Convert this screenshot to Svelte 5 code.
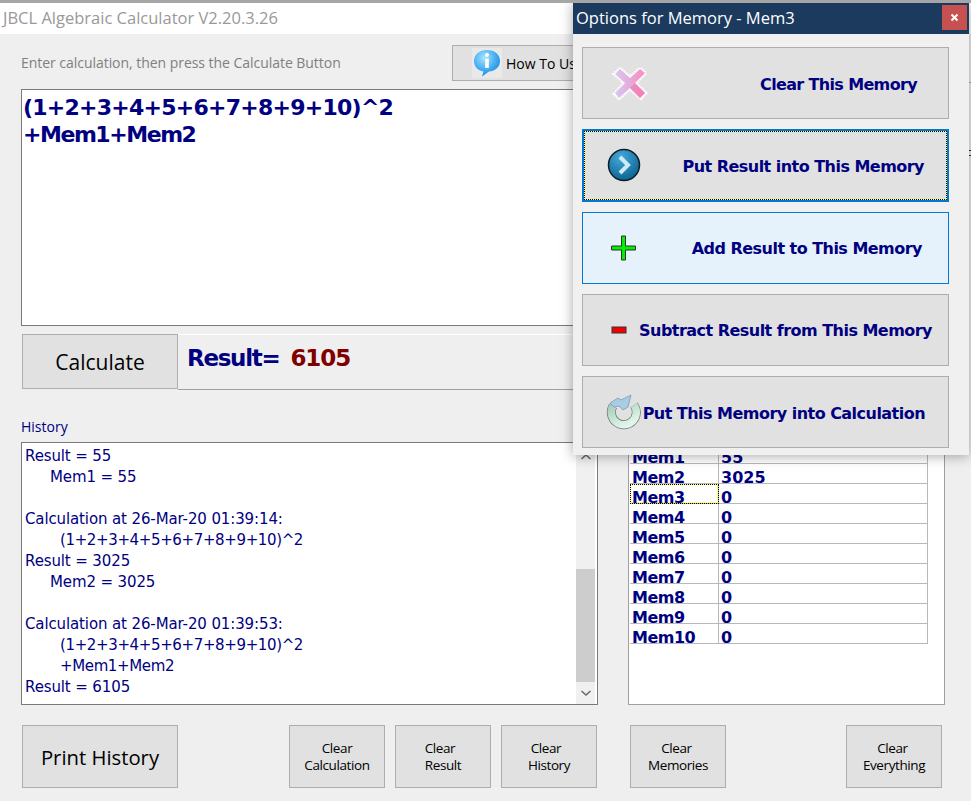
<script>
  const options = [
    { id: 'clear', label: 'Clear This Memory' },
    { id: 'put', label: 'Put Result into This Memory' },
    { id: 'add', label: 'Add Result to This Memory' },
    { id: 'sub', label: 'Subtract Result from This Memory' },
    { id: 'recall', label: 'Put This Memory into Calculation' }
  ];

  const memories = [
    ['Mem1', '55'], ['Mem2', '3025'], ['Mem3', '0'], ['Mem4', '0'], ['Mem5', '0'],
    ['Mem6', '0'], ['Mem7', '0'], ['Mem8', '0'], ['Mem9', '0'], ['Mem10', '0']
  ];

  const history = [
    ['', 'Result = 55'],
    ['mem', 'Mem1 = 55'],
    ['', '\u00a0'],
    ['', 'Calculation at 26-Mar-20 01:39:14:'],
    ['indent', '(1+2+3+4+5+6+7+8+9+10)^2'],
    ['', 'Result = 3025'],
    ['mem', 'Mem2 = 3025'],
    ['', '\u00a0'],
    ['', 'Calculation at 26-Mar-20 01:39:53:'],
    ['indent', '(1+2+3+4+5+6+7+8+9+10)^2'],
    ['indent', '+Mem1+Mem2'],
    ['', 'Result = 6105']
  ];
</script>

<div class="window">
  <header class="titlebar">JBCL Algebraic Calculator V2.20.3.26</header>

  <main class="content">
    <div class="toprow">
      <span class="hint">Enter calculation, then press the Calculate Button</span>
      <button class="btn howto">
        <span class="infobox">
          <svg width="28" height="28" viewBox="0 0 28 28">
            <defs>
              <radialGradient id="bub" cx="0.4" cy="0.3" r="0.8">
                <stop offset="0" stop-color="#a8e4ff" />
                <stop offset="0.6" stop-color="#3aa8f0" />
                <stop offset="1" stop-color="#1878d0" />
              </radialGradient>
            </defs>
            <path d="M14 1C6.5 1 1 5.6 1 12c0 5.5 4 9.6 9.5 10.6L9 27.5l7-5C22.500 22 27 17.600 27 12 27 5.600 21.500 1 14 1z" fill="url(#bub)" />
            <rect x="12.200" y="9.500" width="3.600" height="9.500" fill="#fff" />
            <circle cx="14" cy="6" r="2" fill="#fff" />
          </svg>
        </span>
        How To Use
      </button>
    </div>

    <div class="calc">(1+2+3+4+5+6+7+8+9+10)^2<br /><span class="second">+Mem1+Mem2</span></div>

    <div class="resultrow">
      <button class="btn calculate">Calculate</button>
      <div class="result"><b>Result=</b><b class="value">6105</b></div>
    </div>

    <div class="historylabel">History</div>

    <div class="panels">
      <div class="history">
        <div class="lines">
          {#each history as [kind, text]}
            <div class={kind}>{text}</div>
          {/each}
        </div>
        <div class="scrollbar">
          <svg class="arrow up" width="12" height="8" viewBox="0 0 12 8"><path d="M1.500 6L6 2l4.500 4" fill="none" stroke="#666" stroke-width="1.500" /></svg>
          <div class="thumb"></div>
          <svg class="arrow" width="12" height="8" viewBox="0 0 12 8"><path d="M1.500 2L6 6l4.500-4" fill="none" stroke="#666" stroke-width="1.500" /></svg>
        </div>
      </div>

      <div class="memories">
        <div class="memgrid">
          {#each memories as [name, value]}
            <div class="name" class:focused={name === 'Mem3'}>{name}</div>
            <div class="val">{value}</div>
          {/each}
        </div>
      </div>
    </div>

    <div class="bottom">
      <button class="btn print">Print History</button>
      <button class="btn small">Clear<br />Calculation</button>
      <button class="btn small">Clear&nbsp;&nbsp;<br />Result</button>
      <button class="btn small">Clear&nbsp;&nbsp;<br />History</button>
      <button class="btn small c2">Clear&nbsp;<br />Memories</button>
      <button class="btn small c3">Clear&nbsp;<br />Everything</button>
    </div>
  </main>

  <div class="peek line1"></div>
  <div class="peek line2"></div>

  <section class="dialog">
    <div class="dlgtitle">
      <span>Options for Memory - Mem3</span>
      <button class="close" aria-label="Close">
        <svg width="9" height="9" viewBox="0 0 9 9"><path d="M1.500 1.500l6 6M7.500 1.500l-6 6" stroke="#fff" stroke-width="2" /></svg>
      </button>
    </div>
    <div class="options">
      {#each options as opt}
        <button class="opt {opt.id}">
          <span class="icon">
            {#if opt.id === 'clear'}
              <svg width="36" height="34" viewBox="0 0 36 34">
                <defs>
                  <linearGradient id="xg" x1="0" y1="0" x2="1" y2="0">
                    <stop offset="0" stop-color="#d4c8f2" />
                    <stop offset="1" stop-color="#fb8cc0" />
                  </linearGradient>
                </defs>
                <path d="M8 2l10 9 10-9 6 5-10 10 10 10-5 6-11-10-11 10-5-5 10-11L2 8z" fill="#fff" stroke="#fff" stroke-width="3" stroke-dasharray="1.500 1" />
                <path d="M8 3l10 9 10-9 5 4-10 10 10 10-5 5-10-10-11 10-4-5 10-10L3 8z" fill="url(#xg)" />
                <path d="M23 17l10 10-5 5-10-10z" fill="#f070a8" opacity="0.5" />
              </svg>
            {:else if opt.id === 'put'}
              <svg width="34" height="34" viewBox="0 0 34 34">
                <defs>
                  <radialGradient id="cg" cx="0.4" cy="0.25" r="0.85">
                    <stop offset="0" stop-color="#47a8dc" />
                    <stop offset="1" stop-color="#045c88" />
                  </radialGradient>
                </defs>
                <circle cx="17" cy="17" r="15.500" fill="url(#cg)" stroke="#0c1c28" stroke-width="1.500" />
                <path d="M13 9l8 8-8 8" fill="none" stroke="#cdeaf8" stroke-width="4" />
              </svg>
            {:else if opt.id === 'add'}
              <svg width="26" height="26" viewBox="0 0 26 26">
                <path d="M10.500 1h4v10h10v4h-10v10h-4V15H.500v-4h10z" fill="#00f000" stroke="#333" stroke-width="1" />
              </svg>
            {:else if opt.id === 'sub'}
              <svg width="16" height="8" viewBox="0 0 16 8">
                <rect x="1" y="1" width="14" height="6" fill="#f00000" stroke="#333" />
              </svg>
            {:else}
              <svg width="36" height="36" viewBox="0 0 36 36">
                <defs>
                  <linearGradient id="rg" x1="0" y1="0" x2="0.600" y2="1">
                    <stop offset="0" stop-color="#a8ccbc" />
                    <stop offset="1" stop-color="#e0f6e8" />
                  </linearGradient>
                </defs>
                <path d="M8 12A12.500 12.500 0 1 0 29 11" fill="none" stroke="#6c7c74" stroke-width="9" />
                <path d="M8 12A12.500 12.500 0 1 0 29 11" fill="none" stroke="url(#rg)" stroke-width="7.500" />
                <path d="M5 9l8-5 3 2 10-5-3 12-5 3-4-4-5 1z" fill="#a8cce4" stroke="#7c98ac" stroke-width="0.800" />
              </svg>
            {/if}
          </span>
          <b>{opt.label}</b>
        </button>
      {/each}
    </div>
  </section>
</div>

<style>
  :global(body) {
    margin: 0;
    background: #efefef;
  }

  .window {
    position: relative;
    width: 971px;
    height: 801px;
    overflow: hidden;
    background: #efefef;
    border-top: 3px solid #a6a6a6;
    box-sizing: border-box;
    font-family: "Open Sans", "Noto Sans", sans-serif;
  }

  .titlebar {
    height: 31px;
    line-height: 30px;
    padding-left: 3px;
    background: #fff;
    color: #999;
    font-size: 16.500px;
  }

  .content {
    padding: 11px 0 0 21px;
  }

  .btn {
    padding: 0;
    background: #e1e1e1;
    border: 1px solid #adadad;
    color: #000;
    font-family: "Open Sans", "Noto Sans", sans-serif;
  }

  .toprow {
    display: flex;
    height: 36px;
  }

  .hint {
    width: 431px;
    color: #808080;
    font-size: 14px;
    letter-spacing: -0.04px;
    line-height: 36px;
  }

  .howto {
    display: flex;
    align-items: center;
    gap: 4px;
    width: 160px;
    height: 36px;
    padding-left: 19px;
    font-size: 14px;
    white-space: nowrap;
  }

  .infobox {
    display: flex;
    width: 30px;
    height: 30px;
    align-items: center;
    justify-content: center;
    background: #e9e9e9;
  }

  .calc {
    box-sizing: border-box;
    width: 577px;
    height: 237px;
    margin-top: 8px;
    padding: 4px 1px;
    background: #fff;
    border: 1px solid #7a7a7a;
    color: #000080;
    font-family: "DejaVu Sans", sans-serif;
    font-weight: bold;
    font-size: 22px;
    letter-spacing: -0.75px;
    line-height: 27px;
  }

  .second {
    letter-spacing: -1.450px;
  }

  .resultrow {
    display: flex;
    height: 56px;
    margin-top: 8px;
    margin-left: 1px;
  }

  .calculate {
    width: 156px;
    height: 55px;
    font-size: 21px;
  }

  .result {
    flex: 1;
    display: flex;
    gap: 11px;
    max-width: 400px;
    padding: 8px 0 0 9px;
    border-top: 1px solid #fff;
    border-bottom: 1px solid #a0a0a0;
    color: #000080;
    font-family: "DejaVu Sans", sans-serif;
    font-size: 23px;
    letter-spacing: -1.300px;
    line-height: 30px;
  }

  .value {
    color: #800000;
    letter-spacing: -1.100px;
  }

  .historylabel {
    margin-top: 27px;
    height: 26px;
    color: #000080;
    font-size: 14px;
    line-height: 19px;
  }

  .panels {
    display: flex;
    gap: 30px;
    height: 263px;
    margin-top: -1px;
  }

  .history {
    box-sizing: border-box;
    display: flex;
    justify-content: space-between;
    width: 577px;
    background: #fff;
    border: 1px solid #7a7a7a;
    color: #000080;
    font-family: "DejaVu Sans", sans-serif;
    font-size: 15px;
    letter-spacing: -0.120px;
  }

  .lines {
    padding: 3px 0 0 3px;
    line-height: 21px;
  }

  .mem {
    padding-left: 25px;
  }

  .indent {
    padding-left: 35px;
    letter-spacing: -0.370px;
  }

  .scrollbar {
    display: flex;
    flex-direction: column;
    align-items: center;
    justify-content: space-between;
    width: 19px;
    margin-right: 2px;
    background: #f0f0f0;
  }

  .arrow {
    margin: 7px 0;
  }

  .up {
    margin-top: 10px;
  }

  .thumb {
    width: 19px;
    height: 113px;
    margin-top: auto;
    background: #cdcdcd;
  }

  .memories {
    box-sizing: border-box;
    width: 317px;
    padding-top: 1px;
    padding-left: 1px;
    background: #fff;
    border: 1px solid #a0a0a0;
  }

  .memgrid {
    display: grid;
    grid-template-columns: 89px 209px;
    width: 298px;
    color: #000080;
    font-family: "DejaVu Sans", sans-serif;
    font-weight: bold;
    font-size: 16px;
  }

  .name,
  .val {
    box-sizing: border-box;
    height: 20px;
    padding: 5px 0 0 2px;
    line-height: 17px;
    border-bottom: 1px solid #b8b8b8;
  }

  .name {
    border-right: 1px solid #b8b8b8;
    letter-spacing: -0.500px;
  }

  .val {
    border-right: 1px solid #b8b8b8;
  }

  .focused {
    outline: 1px dotted #000;
    outline-offset: -1px;
    box-shadow: inset 0 0 0 1px #ffff60;
  }

  .bottom {
    display: flex;
    margin-top: 20px;
    padding-left: 1px;
    height: 63px;
  }

  .print {
    width: 156px;
    font-size: 20.300px;
    margin-right: 111px;
  }

  .small {
    width: 96px;
    margin-right: 10px;
    font-size: 13.500px;
    letter-spacing: -0.400px;
    line-height: 17px;
  }

  .c2 {
    margin-left: 23px;
    margin-right: 120px;
  }

  .peek {
    position: absolute;
    right: 0;
    width: 2px;
    height: 1px;
  }

  .line1 {
    top: 79px;
    background: #a8a8a8;
  }

  .line2 {
    top: 147px;
    height: 4px;
    border-top: 1px solid #333;
    border-bottom: 1px solid #333;
  }

  .dialog {
    position: absolute;
    top: 0;
    left: 573px;
    width: 396px;
    height: 452px;
    background: #f0f0f0;
    box-shadow: 0 1px 12px rgba(0, 0, 0, 0.35);
  }

  .dlgtitle {
    display: flex;
    justify-content: space-between;
    height: 31px;
    padding: 2px 2px 0 3px;
    box-sizing: border-box;
    background: #1b3a5e;
    color: #fff;
    font-size: 16.500px;
    line-height: 25px;
  }

  .close {
    display: flex;
    align-items: center;
    justify-content: center;
    width: 25px;
    height: 25px;
    padding: 0;
    border: 0;
    background: #c75050;
  }

  .options {
    display: flex;
    flex-direction: column;
    gap: 10px;
    padding: 13px 20px 0 9px;
  }

  .opt {
    box-sizing: border-box;
    display: flex;
    align-items: center;
    justify-content: space-between;
    width: 367px;
    height: 72.250px;
    background: #e1e1e1;
    border: 1px solid #adadad;
    color: #000080;
    font-family: "DejaVu Sans", sans-serif;
    font-size: 16px;
    letter-spacing: -0.530px;
  }

  .opt b {
    padding-top: 2px;
  }

  .icon {
    display: flex;
  }

  .clear {
    padding: 0 31px 0 29px;
    letter-spacing: -0.650px;
  }

  .put {
    border: 2px solid #0078d7;
    outline: 1px dotted #000;
    outline-offset: -3px;
    box-shadow: inset 0 0 0 1px #ffff60;
    padding: 0 23px 0 23px;
  }

  .add {
    background: #e5f1fb;
    border-color: #0078d7;
    padding: 0 26px 0 28px;
  }

  .sub {
    padding: 0 16px 0 28px;
  }

  .recall {
    padding: 0 23px 0 22px;
  }
</style>
